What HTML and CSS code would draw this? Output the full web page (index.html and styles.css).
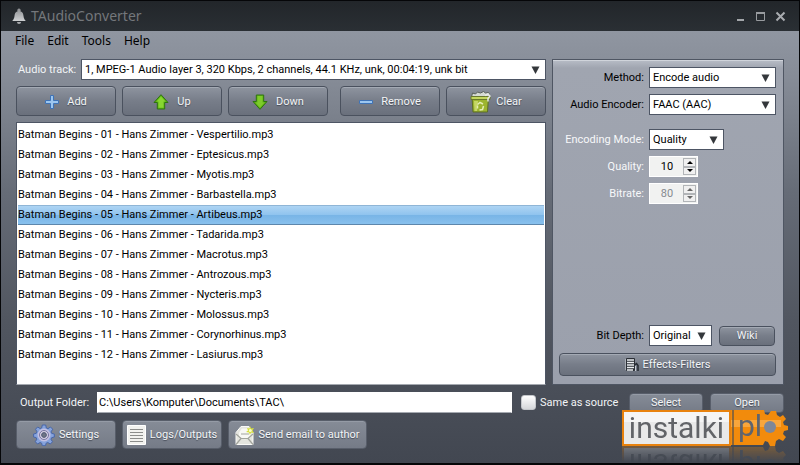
FILE: index.html
```html
<!DOCTYPE html>
<html lang="en">
<head>
<meta charset="utf-8">
<title>TAudioConverter</title>
<link rel="stylesheet" href="styles.css">
</head>
<body>
<div class="window">
  <header class="titlebar">
    <svg class="bell" width="14" height="16" viewBox="0 0 14 16" aria-hidden="true">
      <defs><linearGradient id="bellFill" x1="0" y1="0" x2="0" y2="1"><stop offset="0" stop-color="#8c8e91"/><stop offset="1" stop-color="#ced0d2"/></linearGradient></defs>
      <path d="M7 0.500a1.800 1.800 0 0 1 1.400 2.800C10.800 4 11.300 6 11.500 8c.2 2.400 1 3.500 2.300 5H.2C1.500 11.500 2.300 10.400 2.500 8 2.700 6 3.200 4 5.600 3.300A1.800 1.800 0 0 1 7 .5z" fill="url(#bellFill)"/>
      <path d="M5 14h4a2 2 0 0 1-4 0z" fill="#a9abae"/>
    </svg>
    <h1 class="title">TAudioConverter</h1>
    <div class="window-controls">
      <button class="ctl" type="button" aria-label="Minimize"><svg width="11" height="11" viewBox="0 0 11 11"><path d="M2 9h7" stroke="#a3a6aa" stroke-width="2"/></svg></button>
      <button class="ctl" type="button" aria-label="Maximize"><svg width="11" height="11" viewBox="0 0 11 11"><path d="M1.500 1.500h8v8h-8z" fill="none" stroke="#989b9f"/><path d="M1 2h9" stroke="#989b9f" stroke-width="2"/></svg></button>
      <button class="ctl" type="button" aria-label="Close"><svg width="11" height="11" viewBox="0 0 11 11"><path d="M1.500 1.500l8 8M9.500 1.500l-8 8" stroke="#a9acb0" stroke-width="2"/></svg></button>
    </div>
  </header>

  <nav class="menu" aria-label="Main menu">
    <button type="button">File</button>
    <button type="button">Edit</button>
    <button type="button">Tools</button>
    <button type="button">Help</button>
  </nav>

  <main class="content">
    <section class="files">
      <div class="track">
        <label for="track">Audio track:</label>
        <span class="combo">
          <select id="track"><option>1, MPEG-1 Audio layer 3, 320 Kbps, 2 channels, 44.1 KHz, unk, 00:04:19, unk bit</option></select>
          <svg class="arrow" width="9" height="8" viewBox="0 0 9 8"><path d="M.5.500h8L4.500 8z" fill="#34373b"/></svg>
        </span>
      </div>
      <div class="toolbar">
        <button class="btn" type="button">
          <svg width="14" height="14" viewBox="0 0 14 14"><path d="M5.500.500h3v5h5v3h-5v5h-3v-5h-5v-3h5z" fill="#9cc6ef" stroke="#3f73b6"/></svg>
          Add
        </button>
        <button class="btn" type="button">
          <svg width="16" height="16" viewBox="0 0 16 16"><path d="M8 .7l7 7.800h-3.300V15H4.300V8.500H1z" fill="#5eb512" stroke="#2f7411"/><path d="M8 2.500l4.500 5H10.500v6.300h-5V7.500h-2z" fill="#88d631"/></svg>
          Up
        </button>
        <button class="btn" type="button">
          <svg width="16" height="16" viewBox="0 0 16 16"><path d="M8 15.300L1 7.500h3.300V1h7.400v6.500H15z" fill="#5eb512" stroke="#2f7411"/><path d="M5.500 2h5v6.500h2L8 13.500 3.500 8.500h2z" fill="#7ecb2b"/></svg>
          Down
        </button>
        <button class="btn apart" type="button">
          <svg width="14" height="14" viewBox="0 0 14 14"><path d="M.5 5.500h13v3H.5z" fill="#9cc6ef" stroke="#3f73b6"/></svg>
          Remove
        </button>
        <button class="btn snug" type="button">
          <svg width="21" height="22" viewBox="0 0 21 22"><path d="M1.500 6l1-4 3 1 2-2 3 1 3-1.500 2 1.500 3-.5 1.500 3-.5 3.500z" fill="#d5dad3" stroke="#59605a"/><path d="M2 6h16.500l-1 15H3z" fill="#9db52f" stroke="#5d6f23"/><path d="M1 5.500h19v3H1z" fill="#c3d65e" stroke="#68782d"/><path d="M4 10h4l-1 10H4.500z" fill="#c5d765"/><path d="M7.500 13.500l2.500-2 3 1.500m.5 2-1 3.500-3 .5m-2-1.500 0-3" fill="none" stroke="#e5edb5" stroke-width="1.500"/><path d="M15 4.500l3-1.500 2 2-2 2.500v3" fill="none" stroke="#e6e9e6" stroke-width="1.500"/></svg>
          Clear
        </button>
      </div>
      <ul class="list" role="listbox" aria-label="Files">
        <li role="option">Batman Begins - 01 - Hans Zimmer - Vespertilio.mp3</li>
        <li role="option">Batman Begins - 02 - Hans Zimmer - Eptesicus.mp3</li>
        <li role="option">Batman Begins - 03 - Hans Zimmer - Myotis.mp3</li>
        <li role="option">Batman Begins - 04 - Hans Zimmer - Barbastella.mp3</li>
        <li role="option" aria-selected="true">Batman Begins - 05 - Hans Zimmer - Artibeus.mp3</li>
        <li role="option">Batman Begins - 06 - Hans Zimmer - Tadarida.mp3</li>
        <li role="option">Batman Begins - 07 - Hans Zimmer - Macrotus.mp3</li>
        <li role="option">Batman Begins - 08 - Hans Zimmer - Antrozous.mp3</li>
        <li role="option">Batman Begins - 09 - Hans Zimmer - Nycteris.mp3</li>
        <li role="option">Batman Begins - 10 - Hans Zimmer - Molossus.mp3</li>
        <li role="option">Batman Begins - 11 - Hans Zimmer - Corynorhinus.mp3</li>
        <li role="option">Batman Begins - 12 - Hans Zimmer - Lasiurus.mp3</li>
      </ul>
    </section>

    <section class="panel" aria-label="Encoding">
      <div class="fields">
        <label for="method">Method:</label>
        <span class="combo"><select id="method"><option>Encode audio</option></select><svg class="arrow" width="9" height="8" viewBox="0 0 9 8"><path d="M.5.500h8L4.500 8z" fill="#34373b"/></svg></span>
        <label for="encoder">Audio Encoder:</label>
        <span class="combo"><select id="encoder"><option>FAAC (AAC)</option></select><svg class="arrow" width="9" height="8" viewBox="0 0 9 8"><path d="M.5.500h8L4.500 8z" fill="#34373b"/></svg></span>
      </div>
      <div class="fields light">
        <label for="mode">Encoding Mode:</label>
        <span class="combo mode"><select id="mode"><option>Quality</option></select><svg class="arrow" width="9" height="8" viewBox="0 0 9 8"><path d="M.5.500h8L4.500 8z" fill="#34373b"/></svg></span>
        <label for="quality">Quality:</label>
        <span class="spin">
          <input id="quality" type="number" value="10">
          <span class="steps">
            <button type="button" aria-label="Increase quality"><svg width="6" height="3" viewBox="0 0 6 3"><path d="M0 3L3 0l3 3z"/></svg></button>
            <button type="button" aria-label="Decrease quality"><svg width="6" height="3" viewBox="0 0 6 3"><path d="M0 0l3 3 3-3z"/></svg></button>
          </span>
        </span>
        <label for="bitrate">Bitrate:</label>
        <span class="spin off">
          <input id="bitrate" type="number" value="80" disabled>
          <span class="steps">
            <button type="button" disabled aria-label="Increase bitrate"><svg width="6" height="3" viewBox="0 0 6 3"><path d="M0 3L3 0l3 3z"/></svg></button>
            <button type="button" disabled aria-label="Decrease bitrate"><svg width="6" height="3" viewBox="0 0 6 3"><path d="M0 0l3 3 3-3z"/></svg></button>
          </span>
        </span>
      </div>
      <div class="depth">
        <label for="depth">Bit Depth:</label>
        <span class="combo"><select id="depth"><option>Original</option></select><svg class="arrow" width="9" height="8" viewBox="0 0 9 8"><path d="M.5.500h8L4.500 8z" fill="#34373b"/></svg></span>
        <button class="btn small" type="button">Wiki</button>
      </div>
      <button class="btn effects" type="button">
        <svg width="14" height="14" viewBox="0 0 14 14"><rect x="1" y="0" width="9" height="13" rx="1" fill="#2b2f36"/><path d="M2 2h7M2 4.500h7M2 7h7M2 9.500h7M2 12h6" stroke="#eceff2" stroke-width="1.300"/><path d="M0 1v11" stroke="#d5d9de"/><path d="M9.500 7l2-1.500 1.500 2V13" fill="none" stroke="#252a31" stroke-width="1.500"/><path d="M10.500 8v5" stroke="#c8cdd4"/></svg>
        Effects-Filters
      </button>
    </section>
  </main>

  <footer class="bottom">
    <div class="output">
      <label for="folder">Output Folder:</label>
      <input id="folder" type="text" value="C:\Users\Komputer\Documents\TAC\">
      <label class="check"><input type="checkbox">Same as source</label>
      <div class="folder-buttons">
        <button class="btn small" type="button">Select</button>
        <button class="btn small" type="button">Open</button>
      </div>
    </div>
    <div class="actions">
      <button class="btn" type="button">
        <svg width="22" height="22" viewBox="0 0 22 22"><path d="M9.300 1h3.400l.6 3 1.600.7L17.500 3l2.200 2.200-1.700 2.700.7 1.500 2.600.6v3l-2.700.7-.6 1.600 1.500 2.500-2.200 2.200-2.500-1.500-1.700.7-.6 2.500H9.300l-.7-2.600-1.500-.6-2.600 1.500-2.200-2.300 1.500-2.500-.6-1.600-2.600-.6v-3l2.700-.7.7-1.500-1.500-2.600L4.700 3l2.500 1.600 1.500-.7z" fill="#86a3dc" stroke="#4866a8"/><circle cx="11" cy="11" r="6.500" fill="#c3c0e2"/><circle cx="11" cy="11" r="4.500" fill="#d8d2e2" stroke="#7776a3"/><circle cx="11" cy="11" r="2.400" fill="#6e7584" stroke="#515978"/></svg>
        Settings
      </button>
      <button class="btn" type="button">
        <svg width="19" height="20" viewBox="0 0 19 20"><path d="M.5.500h18v19H.5z" fill="#f2f2ef" stroke="#fff"/><path d="M3 4.500h13M3 7.500h13M3 10.500h13M3 13.500h13M3 16.500h13" stroke="#8c8d8b"/></svg>
        Logs/Outputs
      </button>
      <button class="btn mail" type="button">
        <svg width="19" height="20" viewBox="0 0 19 20"><path d="M1 7.500L6 1.500h8l4 6v12H1z" fill="#e4e5df" stroke="#fafaf8"/><path d="M4 7.500L7 3.500h6l3 4v4l-6 3-6-3z" fill="#f8f8f4"/><path d="M1 9l5 4.500h7L18 9M1 19.500l5-6M18 19.500l-5-6M6 9h8" fill="none" stroke="#a2a49d" stroke-width="1.200"/><path d="M15 1l1 2.500 3-.5-1.500 2.500L19 8l-3-.5L15 10l-1-2.500-3-.5 2-1.500L12 3l2.500.5z" fill="#d6df3c"/><circle cx="15.300" cy="5.500" r="1.500" fill="#fafbc8"/></svg>
        Send email to author
      </button>
    </div>
  </footer>

  <div class="brand">
    <span class="brand-name">instalki</span>
    <span class="brand-tld">
      <svg class="brand-gear" width="57" height="36" viewBox="0 0 57 36" aria-hidden="true">
        <path d="M0 0h33l1 4 3 1 3-4h5l1 4 3 2 3-2 3 4-3 3 1 3 4 1v4l-4 1-1 3 3 3-3 4-4-2-3 2-1 5h-5l-2-4-3-1-2 4H0z" fill="#f28b0c"/>
        <path d="M0 10h50v7H0z" fill="#ffc777" opacity=".45"/>
        <path d="M2 0v35" stroke="#6a5a45" stroke-width="1.500"/>
        <circle cx="39" cy="17" r="6" fill="#7d8799"/>
      </svg>
      <span class="brand-pl">pl</span>
    </span>
  </div>
</div>
</body>
</html>
```
FILE: styles.css
```css
* { box-sizing: border-box; }

body {
  margin: 0;
  font: 11px/14px "Roboto", "Noto Sans", sans-serif;
  color: #000;
}

button, input, select { font: inherit; color: inherit; margin: 0; }
svg { flex: none; display: block; }

.window {
  position: relative;
  display: flex;
  flex-direction: column;
  min-height: 100vh;
  border: 1px solid #050608;
  border-bottom-width: 2px;
  background: linear-gradient(#9096a1 30px, #858b96 80px, #666c77 190px, #515660 320px, #424751 100%);
}

.titlebar {
  display: flex;
  align-items: center;
  gap: 5px;
  height: 30px;
  padding: 0 13px 0 11px;
  background: linear-gradient(#22262a, #2a2f34);
}
.title {
  flex: 1;
  margin: 0;
  font: 14px/20px "Noto Sans", sans-serif;
  color: #74777b;
}
.window-controls { display: flex; gap: 9px; }
.ctl { padding: 0; border: 0; background: none; }

.menu { display: flex; gap: 13px; padding: 0 14px; height: 20px; }
.menu button {
  padding: 0;
  border: 0;
  background: none;
  font: 12px/20px "Noto Sans", sans-serif;
}

.content {
  display: grid;
  grid-template-columns: minmax(0, 1fr) 232px;
  gap: 6px;
  padding: 8px 15px 0;
}
.files { display: flex; flex-direction: column; gap: 6px; }

.track { display: flex; align-items: center; gap: 5px; padding-left: 2px; color: #f2f4f6; }
.track label { width: 58px; white-space: nowrap; }
.track .combo { flex: 1; }

.combo { display: grid; align-items: center; color: #000; }
.combo select {
  grid-area: 1 / 1;
  width: 100%;
  min-width: 0;
  height: 21px;
  padding: 0 18px 0 3px;
  border: 1px solid #4d5564;
  border-radius: 0;
  background: #fff;
  appearance: none;
}
.arrow { grid-area: 1 / 1; justify-self: end; margin-right: 6px; pointer-events: none; }

.toolbar { display: flex; gap: 6px; }
.toolbar .btn { flex: 1; }
.toolbar .apart { margin-left: 6px; }

.btn {
  display: flex;
  align-items: center;
  justify-content: center;
  gap: 8px;
  height: 30px;
  padding: 1px 6px 0;
  border: 1px solid #4a515e;
  border-radius: 4px;
  background: linear-gradient(#8e949f, #777d89 50%, #6a707c);
  box-shadow: inset 0 1px #a4aab4;
  color: #f3f5f7;
  text-shadow: 0 1px 1px #454b57;
  white-space: nowrap;
}
.btn.small { height: 20px; }
.btn.snug { gap: 5px; }

.list {
  margin: 0;
  padding: 2px 1px 19px;
  height: 263px;
  list-style: none;
  background: #fff;
  border: 1px solid #4d5564;
  border-bottom-color: #a5a9b0;
}
.list li { height: 20px; line-height: 20px; white-space: nowrap; }
.list [aria-selected="true"] {
  background: linear-gradient(#b1d6f4, #8fc3ee 50%, #78b4e6 50%, #8ac2ee);
  box-shadow: inset 0 1px #8fb5d6, inset 0 -1px #5d87ac;
}

.panel {
  display: flex;
  flex-direction: column;
  padding: 7px 7px 8px 6px;
  border: 1px solid #4f5663;
  background: linear-gradient(#b8bdc7, #a0a5b0 8px, #9ba0ac);
  box-shadow: inset 0 1px #d0d4db;
}
.fields {
  display: grid;
  grid-template-columns: 85px 1fr;
  gap: 6px 5px;
  align-items: center;
}
.fields label { text-align: right; white-space: nowrap; }
.fields.light { margin-top: 14px; color: #f7f8fa; }
.mode { width: 75px; }

.spin {
  display: flex;
  width: 49px;
  height: 21px;
  padding: 1px;
  background: #f1f2f1;
  border: 1px solid #fff;
  color: #000;
}
.spin input {
  width: 32px;
  min-width: 0;
  padding: 0;
  border: 0;
  background: none;
  text-align: center;
  appearance: textfield;
}
.spin input::-webkit-inner-spin-button { appearance: none; margin: 0; }
.steps { display: flex; flex-direction: column; flex: 1; }
.steps button {
  display: grid;
  place-items: center;
  flex: 1;
  padding: 0;
  border: 1px solid #b2b5b8;
  background: #f0f0f0;
}
.spin.off { color: #868a8f; }
.spin.off svg { fill: #666; }

.depth {
  display: grid;
  grid-template-columns: 85px 63px 58px;
  column-gap: 5px;
  align-items: center;
  margin-top: auto;
}
.depth label { text-align: right; }
.depth .btn { margin-left: 2px; }
.effects { height: 23px; margin-top: 7px; gap: 4px; }

.bottom {
  display: flex;
  flex-direction: column;
  gap: 7px;
  padding: 7px 15px 14px;
}
.output { display: flex; align-items: center; gap: 5px; padding-left: 4px; color: #f2f4f6; }
.output label { white-space: nowrap; }
.output > label:first-child { width: 72px; }
#folder {
  flex: 1;
  min-width: 0;
  height: 21px;
  padding: 0 1px;
  border: 1px solid #fff;
  border-bottom-color: #a5a9b0;
  background: #fff;
  color: #000;
}
.check { display: flex; align-items: center; gap: 4px; width: 95px; margin-left: 4px; }
.check input {
  appearance: none;
  flex: none;
  width: 15px;
  height: 15px;
  border: 1px solid #c4c7cb;
  border-radius: 3px;
  background: linear-gradient(#fff, #d5d7da);
}
.folder-buttons { display: grid; grid-template-columns: 74px 74px; gap: 7px; margin-left: 8px; }
.bottom .btn {
  border-color: #585e6a;
  background: linear-gradient(#868c97, #757b87);
  box-shadow: inset 0 1px #959ba6;
}

.actions { display: flex; gap: 6px; }
.actions .btn { width: 100px; height: 29px; gap: 4px; }
.actions .mail { width: 139px; }

.brand {
  position: absolute;
  right: 11px;
  bottom: 17px;
  display: flex;
  -webkit-box-reflect: below 0 linear-gradient(transparent 55%, rgb(0 0 0 / 30%));
}
.brand-name {
  width: 109px;
  height: 36px;
  border: 2px solid #e8820e;
  background: linear-gradient(#f5f5f5 30%, #e9e9e9 30%);
  font: 30px/32px "Roboto", sans-serif;
  text-align: center;
  color: #626468;
}
.brand-tld { display: grid; }
.brand-gear, .brand-pl { grid-area: 1 / 1; }
.brand-pl { z-index: 1; padding-left: 7px; font: 30px/32px "Roboto", sans-serif; color: #5d6470; }
```
